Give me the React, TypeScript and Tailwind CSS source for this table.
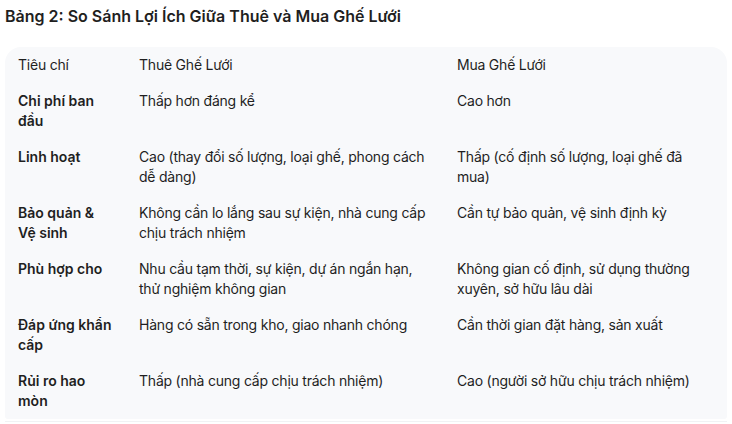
import React from 'react';

type Row = { label: string; rent: string; buy: string };

const rows: Row[] = [
    { label: "Chi phí ban đầu", rent: "Thấp hơn đáng kể", buy: "Cao hơn" },
    { label: "Linh hoạt", rent: "Cao (thay đổi số lượng, loại ghế, phong cách dễ dàng)", buy: "Thấp (cố định số lượng, loại ghế đã mua)" },
    { label: "Bảo quản & Vệ sinh", rent: "Không cần lo lắng sau sự kiện, nhà cung cấp chịu trách nhiệm", buy: "Cần tự bảo quản, vệ sinh định kỳ" },
    { label: "Phù hợp cho", rent: "Nhu cầu tạm thời, sự kiện, dự án ngắn hạn, thử nghiệm không gian", buy: "Không gian cố định, sử dụng thường xuyên, sở hữu lâu dài" },
    { label: "Đáp ứng khẩn cấp", rent: "Hàng có sẵn trong kho, giao nhanh chóng", buy: "Cần thời gian đặt hàng, sản xuất" },
    { label: "Rủi ro hao mòn", rent: "Thấp (nhà cung cấp chịu trách nhiệm)", buy: "Cao (người sở hữu chịu trách nhiệm)" },
];

const App: React.FC = () => {
    return (
        <div className="w-[732px] h-[424px] overflow-hidden bg-white px-[5px] pt-[4px] text-[#1f1f1f] font-['Inter','Noto_Sans',sans-serif]">
            <h2 className="text-[16px] leading-6 font-semibold">Bảng 2: So Sánh Lợi Ích Giữa Thuê và Mua Ghế Lưới</h2>

            {/* Table card */}
            <div className="mt-[19px] bg-[#f8f9fb] rounded-t-2xl rounded-b-[3px] overflow-hidden">
                <table className="w-[722px] table-fixed border-collapse text-[14px] leading-5">
                    <colgroup>
                        <col className="w-[121px]" />
                        <col className="w-[318px]" />
                        <col className="w-[283px]" />
                    </colgroup>
                    <thead>
                        <tr className="text-left tracking-[-0.22px]">
                            <th className="font-normal pl-[13px] pr-3 py-2">Tiêu chí</th>
                            <th className="font-normal pl-[13px] pr-3 py-2">Thuê Ghế Lưới</th>
                            <th className="font-normal pl-[13px] pr-3 py-2">Mua Ghế Lưới</th>
                        </tr>
                    </thead>
                    <tbody>
                        {rows.map((r) => (
                            <tr key={r.label} className="align-top">
                                <td className="font-semibold pl-[13px] pr-3 py-2">{r.label}</td>
                                <td className="pl-[13px] pr-3 py-2 tracking-[-0.22px]">{r.rent}</td>
                                <td className="pl-[13px] pr-3 py-2 tracking-[-0.22px]">{r.buy}</td>
                            </tr>
                        ))}
                    </tbody>
                </table>
            </div>
            <div className="mt-[2px] h-px bg-[#f1f2f4]" />
        </div>
    );
};

export default App;
